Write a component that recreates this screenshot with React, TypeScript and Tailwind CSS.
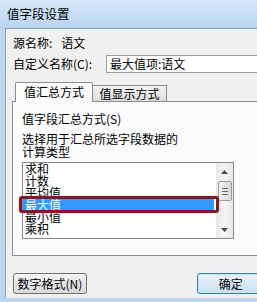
export default function App() {
  const items = ["求和", "计数", "平均值", "最大值", "最小值", "乘积"];
  return (
    <div className="relative w-[257px] h-[302px] overflow-hidden bg-[#bcd6f0] font-['Noto_Sans_CJK_SC','Noto_Sans',sans-serif] text-[12px] text-black">
      {/* title bar */}
      <div className="h-[28px] bg-gradient-to-b from-[#d6e8f9] to-[#b8d4f1] flex items-center pl-[7px] pb-[1px] leading-[14px] text-[12.5px]">
        值字段设置
      </div>
      {/* client area */}
      <div className="ml-[5px] w-[260px] h-[270px] border-l border-t border-[#8ba0b6] bg-[#f0f0f0] flex flex-col">
        {/* row 1 */}
        <div className="mt-[6px] pl-[7px] h-[15px] flex items-center leading-[14px]">
          <span>源名称:</span>
          <span className="ml-[9px]">语文</span>
        </div>
        {/* row 2 */}
        <div className="mt-[5px] pl-[7px] h-[18px] flex items-center leading-[14px]">
          <span className="w-[93px]">自定义名称(C):</span>
          <div className="h-[18px] flex-1 border border-[#9a9da3] border-r-0 bg-white flex items-center pl-[3px]">
            最大值项:语文
          </div>
        </div>
        {/* tabs */}
        <div className="relative z-10 mt-[9px] ml-[9px] h-[20px] -mb-[1px] flex items-start leading-[14px]">
          <div className="w-[78px] h-[20px] border border-b-0 border-[#898c95] bg-[#fbfbfb] rounded-t-[2px] flex items-center justify-center pb-[1px]">
            值汇总方式
          </div>
          <div className="-ml-[1px] mt-[3px] w-[75px] h-[16px] border border-b-0 border-[#898c95] bg-gradient-to-b from-[#f4f4f4] to-[#dcdcdc] flex items-center justify-center">
            值显示方式
          </div>
        </div>
        {/* panel */}
        <div className="relative z-0 ml-[6px] w-[260px] h-[155px] border border-r-0 border-[#898c95] bg-[#fbfbfb] pl-[9px] leading-[13px]">
          <div className="mt-[9px] h-[14px] flex items-center">值字段汇总方式(S)</div>
          <div className="mt-[7px]">选择用于汇总所选字段数据的</div>
          <div>计算类型</div>
          {/* listbox */}
          <div className="relative mt-[4px] w-[212px] h-[77px] border border-[#828790] bg-white flex">
            <div className="flex-1">
              {items.map((it, i) => (
                <div
                  key={it}
                  className={
                    i === 3
                      ? "h-[12px] leading-[12px] pl-[2px] bg-[#3399ff] text-white mr-[2px] overflow-hidden"
                      : "h-[12px] leading-[12px] pl-[2px] overflow-hidden"
                  }
                >
                  {it}
                </div>
              ))}
            </div>
            {/* scrollbar */}
            <div className="w-[17px] h-full bg-gradient-to-r from-[#e8e8e8] via-[#f4f4f4] to-[#e8e8e8] flex flex-col items-center">
              <div className="h-[17px] w-full flex items-center justify-center">
                <svg width="7" height="4" viewBox="0 0 7 4">
                  <path d="M3.5 0 L7 4 L0 4 Z" fill="#4b4b4b" />
                </svg>
              </div>
              <div className="mt-[1px] w-[14px] h-[20px] border border-[#9b9b9b] rounded-[2px] bg-gradient-to-r from-[#f3f3f3] to-[#d8d8d8] flex flex-col items-center justify-center gap-[2px]">
                <div className="w-[6px] h-[1px] bg-[#6a6a6a]" />
                <div className="w-[6px] h-[1px] bg-[#6a6a6a]" />
                <div className="w-[6px] h-[1px] bg-[#6a6a6a]" />
              </div>
              <div className="flex-1" />
              <div className="h-[17px] w-full flex items-center justify-center">
                <svg width="7" height="4" viewBox="0 0 7 4">
                  <path d="M0 0 L7 0 L3.5 4 Z" fill="#4b4b4b" />
                </svg>
              </div>
            </div>
            {/* annotation */}
            <div className="absolute left-[-4px] top-[33px] w-[200px] h-[17px] border-[3px] border-[#7c1b2a] rounded-[3px] shadow-[0_0_2px_#e8a0a0]" />
          </div>
        </div>
        {/* buttons */}
        <div className="mt-[17px] pl-[7px] flex gap-[110px] leading-[14px]">
          <div className="w-[83px] h-[21px] border border-[#707070] rounded-[3px] bg-gradient-to-b from-[#f4f4f4] to-[#d9d9d9] flex items-center justify-center">
            数字格式(N)
          </div>
          <div className="w-[77px] h-[21px] border border-[#3c7fb1] rounded-[3px] bg-gradient-to-b from-[#eaf3fb] to-[#c9dff0] shadow-[inset_0_0_0_1px_#bfe3f7] flex items-center justify-center">
            确定
          </div>
        </div>
      </div>
    </div>
  );
}
